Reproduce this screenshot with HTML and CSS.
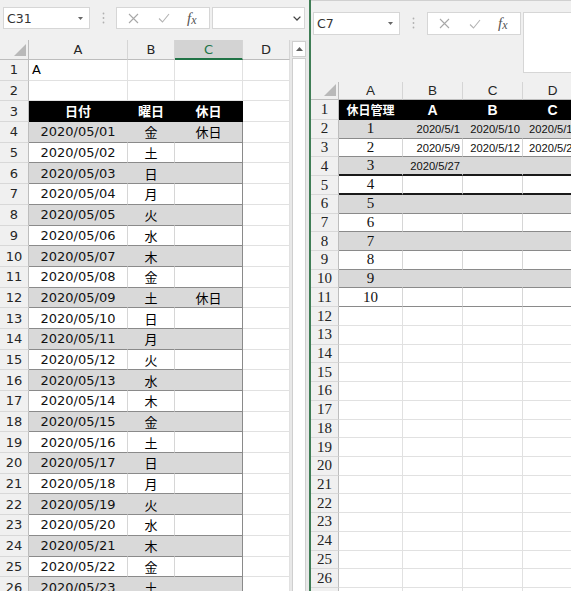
FILE: index.html
```html
<!DOCTYPE html>
<html lang="ja">
<head>
<meta charset="utf-8">
<title>Excel</title>
<link rel="stylesheet" href="styles.css">
</head>
<body>
<div class="app">
  <section class="pane left">
    <div class="fbar">
      <div class="namebox"><span>C31</span><svg width="5" height="3" viewBox="0 0 5 3"><path d="M0 0H5L2.5 3Z" fill="#666"/></svg></div>
      <div class="dots"><svg width="3" height="12" viewBox="0 0 3 12"><circle cx="1.5" cy="1.5" r="0.9" fill="#b0b0b0"/><circle cx="1.5" cy="6" r="0.9" fill="#b0b0b0"/><circle cx="1.5" cy="10.5" r="0.9" fill="#b0b0b0"/></svg></div>
      <div class="fxgroup">
        <svg width="11" height="11" viewBox="0 0 11 11"><path d="M1 1L10 10M10 1L1 10" stroke="#a8a8a8" stroke-width="1.1" fill="none"/></svg>
        <svg width="12" height="10" viewBox="0 0 12 10"><path d="M1 5.5L4.5 9L11 1" stroke="#b4b4b4" stroke-width="1.1" fill="none"/></svg>
        <span class="fx">f<span class="fxx">x</span></span>
      </div>
      <div class="finput"><svg width="8" height="5" viewBox="0 0 8 5"><path d="M0.6 0.6L4 4L7.4 0.6" stroke="#444" stroke-width="1.3" fill="none"/></svg></div>
    </div>
    <div class="lsheet">
      <div class="lgrid">
        <div class="row hdr"><div class="corner"><svg width="12" height="12" viewBox="0 0 12 12"><path d="M12 0V12H0Z" fill="#b9b9b9"/></svg></div><div class="ch">A</div><div class="ch">B</div><div class="ch sel">C</div><div class="ch">D</div></div>
        <div class="row"><div class="rh">1</div><div class="a left-txt">A</div><div class="b"></div><div class="cc"></div><div class="e"></div></div>
        <div class="row"><div class="rh">2</div><div class="a"></div><div class="b"></div><div class="cc"></div><div class="e"></div></div>
        <div class="row th"><div class="rh">3</div><div class="a">日付</div><div class="b">曜日</div><div class="cc">休日</div><div class="e"></div></div>
        <div class="row d g"><div class="rh">4</div><div class="a">2020/05/01</div><div class="b">金</div><div class="cc">休日</div><div class="e"></div></div>
        <div class="row d"><div class="rh">5</div><div class="a">2020/05/02</div><div class="b">土</div><div class="cc"></div><div class="e"></div></div>
        <div class="row d g"><div class="rh">6</div><div class="a">2020/05/03</div><div class="b">日</div><div class="cc"></div><div class="e"></div></div>
        <div class="row d"><div class="rh">7</div><div class="a">2020/05/04</div><div class="b">月</div><div class="cc"></div><div class="e"></div></div>
        <div class="row d g"><div class="rh">8</div><div class="a">2020/05/05</div><div class="b">火</div><div class="cc"></div><div class="e"></div></div>
        <div class="row d"><div class="rh">9</div><div class="a">2020/05/06</div><div class="b">水</div><div class="cc"></div><div class="e"></div></div>
        <div class="row d g"><div class="rh">10</div><div class="a">2020/05/07</div><div class="b">木</div><div class="cc"></div><div class="e"></div></div>
        <div class="row d"><div class="rh">11</div><div class="a">2020/05/08</div><div class="b">金</div><div class="cc"></div><div class="e"></div></div>
        <div class="row d g"><div class="rh">12</div><div class="a">2020/05/09</div><div class="b">土</div><div class="cc">休日</div><div class="e"></div></div>
        <div class="row d"><div class="rh">13</div><div class="a">2020/05/10</div><div class="b">日</div><div class="cc"></div><div class="e"></div></div>
        <div class="row d g"><div class="rh">14</div><div class="a">2020/05/11</div><div class="b">月</div><div class="cc"></div><div class="e"></div></div>
        <div class="row d"><div class="rh">15</div><div class="a">2020/05/12</div><div class="b">火</div><div class="cc"></div><div class="e"></div></div>
        <div class="row d g"><div class="rh">16</div><div class="a">2020/05/13</div><div class="b">水</div><div class="cc"></div><div class="e"></div></div>
        <div class="row d"><div class="rh">17</div><div class="a">2020/05/14</div><div class="b">木</div><div class="cc"></div><div class="e"></div></div>
        <div class="row d g"><div class="rh">18</div><div class="a">2020/05/15</div><div class="b">金</div><div class="cc"></div><div class="e"></div></div>
        <div class="row d"><div class="rh">19</div><div class="a">2020/05/16</div><div class="b">土</div><div class="cc"></div><div class="e"></div></div>
        <div class="row d g"><div class="rh">20</div><div class="a">2020/05/17</div><div class="b">日</div><div class="cc"></div><div class="e"></div></div>
        <div class="row d"><div class="rh">21</div><div class="a">2020/05/18</div><div class="b">月</div><div class="cc"></div><div class="e"></div></div>
        <div class="row d g"><div class="rh">22</div><div class="a">2020/05/19</div><div class="b">火</div><div class="cc"></div><div class="e"></div></div>
        <div class="row d"><div class="rh">23</div><div class="a">2020/05/20</div><div class="b">水</div><div class="cc"></div><div class="e"></div></div>
        <div class="row d g"><div class="rh">24</div><div class="a">2020/05/21</div><div class="b">木</div><div class="cc"></div><div class="e"></div></div>
        <div class="row d"><div class="rh">25</div><div class="a">2020/05/22</div><div class="b">金</div><div class="cc"></div><div class="e"></div></div>
        <div class="row d g"><div class="rh">26</div><div class="a">2020/05/23</div><div class="b">土</div><div class="cc"></div><div class="e"></div></div>
      </div>
      <div class="vscroll">
        <div class="upbtn"><svg width="7" height="4" viewBox="0 0 7 4"><path d="M0 4H7L3.5 0Z" fill="#606060"/></svg></div>
        <div class="thumb"></div>
      </div>
    </div>
  </section>
  <div class="divider"></div>
  <section class="pane right">
    <div class="fbar fbar-r">
      <div class="namebox"><span>C7</span><svg width="5" height="3" viewBox="0 0 5 3"><path d="M0 0H5L2.5 3Z" fill="#666"/></svg></div>
      <div class="dots"><svg width="3" height="12" viewBox="0 0 3 12"><circle cx="1.5" cy="1.5" r="0.9" fill="#b0b0b0"/><circle cx="1.5" cy="6" r="0.9" fill="#b0b0b0"/><circle cx="1.5" cy="10.5" r="0.9" fill="#b0b0b0"/></svg></div>
      <div class="fxgroup">
        <svg width="11" height="11" viewBox="0 0 11 11"><path d="M1 1L10 10M10 1L1 10" stroke="#a8a8a8" stroke-width="1.1" fill="none"/></svg>
        <svg width="12" height="10" viewBox="0 0 12 10"><path d="M1 5.5L4.5 9L11 1" stroke="#b4b4b4" stroke-width="1.1" fill="none"/></svg>
        <span class="fx">f<span class="fxx">x</span></span>
      </div>
      <div class="finput tall"></div>
    </div>
    <div class="rgrid">
      <div class="row hdr"><div class="corner"><svg width="12" height="12" viewBox="0 0 12 12"><path d="M12 0V12H0Z" fill="#b9b9b9"/></svg></div><div class="ch">A</div><div class="ch">B</div><div class="ch">C</div><div class="ch">D</div></div>
      <div class="row th first"><div class="rh">1</div><div class="a jp">休日管理</div><div class="b">A</div><div class="cc">B</div><div class="e">C</div></div>
      <div class="row d g"><div class="rh">2</div><div class="a num">1</div><div class="b dt">2020/5/1</div><div class="cc dt">2020/5/10</div><div class="e dt">2020/5/16</div></div>
      <div class="row d"><div class="rh">3</div><div class="a num">2</div><div class="b dt">2020/5/9</div><div class="cc dt">2020/5/12</div><div class="e dt">2020/5/23</div></div>
      <div class="row d g dark"><div class="rh">4</div><div class="a num">3</div><div class="b dt">2020/5/27</div><div class="cc"></div><div class="e"></div></div>
      <div class="row d dark"><div class="rh">5</div><div class="a num">4</div><div class="b"></div><div class="cc"></div><div class="e"></div></div>
      <div class="row d g"><div class="rh">6</div><div class="a num">5</div><div class="b"></div><div class="cc"></div><div class="e"></div></div>
      <div class="row d"><div class="rh">7</div><div class="a num">6</div><div class="b"></div><div class="cc"></div><div class="e"></div></div>
      <div class="row d g"><div class="rh">8</div><div class="a num">7</div><div class="b"></div><div class="cc"></div><div class="e"></div></div>
      <div class="row d"><div class="rh">9</div><div class="a num">8</div><div class="b"></div><div class="cc"></div><div class="e"></div></div>
      <div class="row d g"><div class="rh">10</div><div class="a num">9</div><div class="b"></div><div class="cc"></div><div class="e"></div></div>
      <div class="row d"><div class="rh">11</div><div class="a num">10</div><div class="b"></div><div class="cc"></div><div class="e"></div></div>
      <div class="row"><div class="rh">12</div><div class="a"></div><div class="b"></div><div class="cc"></div><div class="e"></div></div>
      <div class="row"><div class="rh">13</div><div class="a"></div><div class="b"></div><div class="cc"></div><div class="e"></div></div>
      <div class="row"><div class="rh">14</div><div class="a"></div><div class="b"></div><div class="cc"></div><div class="e"></div></div>
      <div class="row"><div class="rh">15</div><div class="a"></div><div class="b"></div><div class="cc"></div><div class="e"></div></div>
      <div class="row"><div class="rh">16</div><div class="a"></div><div class="b"></div><div class="cc"></div><div class="e"></div></div>
      <div class="row"><div class="rh">17</div><div class="a"></div><div class="b"></div><div class="cc"></div><div class="e"></div></div>
      <div class="row"><div class="rh">18</div><div class="a"></div><div class="b"></div><div class="cc"></div><div class="e"></div></div>
      <div class="row"><div class="rh">19</div><div class="a"></div><div class="b"></div><div class="cc"></div><div class="e"></div></div>
      <div class="row"><div class="rh">20</div><div class="a"></div><div class="b"></div><div class="cc"></div><div class="e"></div></div>
      <div class="row"><div class="rh">21</div><div class="a"></div><div class="b"></div><div class="cc"></div><div class="e"></div></div>
      <div class="row"><div class="rh">22</div><div class="a"></div><div class="b"></div><div class="cc"></div><div class="e"></div></div>
      <div class="row"><div class="rh">23</div><div class="a"></div><div class="b"></div><div class="cc"></div><div class="e"></div></div>
      <div class="row"><div class="rh">24</div><div class="a"></div><div class="b"></div><div class="cc"></div><div class="e"></div></div>
      <div class="row"><div class="rh">25</div><div class="a"></div><div class="b"></div><div class="cc"></div><div class="e"></div></div>
      <div class="row"><div class="rh">26</div><div class="a"></div><div class="b"></div><div class="cc"></div><div class="e"></div></div>
      <div class="row"><div class="rh">27</div><div class="a"></div><div class="b"></div><div class="cc"></div><div class="e"></div></div>
    </div>
  </section>
</div>
</body>
</html>
```
FILE: styles.css
```css
html, body {
  margin: 0;
  padding: 0;
  background: #ffffff;
}
body {
  width: 571px;
  height: 591px;
  overflow: hidden;
  font-family: "DejaVu Sans", "Noto Sans CJK JP", sans-serif;
  color: #000;
}
.app {
  display: flex;
  width: 571px;
  height: 591px;
  overflow: hidden;
}
.pane {
  display: flex;
  flex-direction: column;
  overflow: hidden;
  background: #f0f0f0;
}
.left {
  width: 309px;
  flex: none;
}
.divider {
  width: 2px;
  flex: none;
  background: #3f7d55;
}
.right {
  flex: 1;
  min-width: 0;
  border-top: 1px solid #d0d0d0;
  box-sizing: border-box;
}

/* formula bar */
.fbar {
  display: flex;
  align-items: flex-start;
  height: 40px;
  flex: none;
  padding-top: 7px;
  box-sizing: border-box;
}
.fbar-r {
  height: 81px;
  padding-top: 11px;
}
.namebox {
  width: 87px;
  height: 22px;
  margin-left: 3px;
  box-sizing: border-box;
  background: #fff;
  border: 1px solid #d6d6d6;
  display: flex;
  align-items: center;
  justify-content: space-between;
  padding: 0 6px 0 3px;
  font-family: "DejaVu Sans", sans-serif;
  font-size: 12.5px;
  color: #333;
}
.fbar-r .namebox {
  margin-left: 2px;
  height: 23px;
}
.dots {
  width: 26px;
  height: 22px;
  display: flex;
  align-items: center;
  justify-content: center;
}
.fxgroup {
  width: 94px;
  height: 22px;
  box-sizing: border-box;
  background: #fff;
  border: 1px solid #d6d6d6;
  display: flex;
  align-items: center;
  padding-left: 11px;
  gap: 19px;
}
.fbar-r .fxgroup {
  height: 23px;
  margin-left: 1px;
}
.fx {
  font-family: "Liberation Serif", serif;
  font-style: italic;
  font-size: 15px;
  color: #555;
  line-height: 1;
  margin-left: -2px;
}
.fxx {
  font-size: 12px;
  position: relative;
  top: 1px;
}
.finput {
  width: 93px;
  height: 22px;
  margin-left: 2px;
  box-sizing: border-box;
  background: #fff;
  border: 1px solid #d6d6d6;
  display: flex;
  align-items: center;
  justify-content: flex-end;
  padding-right: 3px;
}
.finput.tall {
  width: auto;
  flex: 1;
  height: 61px;
  border-right: none;
}

/* sheet */
.lsheet {
  display: flex;
  flex: 1;
  min-height: 0;
}
.lgrid {
  width: 290px;
  flex: none;
  background: #fff;
}
.vscroll {
  width: 19px;
  flex: none;
  background: #e8e8e8;
  display: flex;
  flex-direction: column;
  padding: 1px 3px 0 2px;
  box-sizing: border-box;
  gap: 1px;
}
.upbtn {
  height: 16px;
  background: #fff;
  border: 1px solid #cfcfcf;
  box-sizing: border-box;
  display: flex;
  align-items: center;
  justify-content: center;
}
.thumb {
  flex: 1;
  background: #fff;
  border: 1px solid #cfcfcf;
  border-bottom: none;
}

.row {
  display: grid;
  height: 20.7px;
}
.lgrid .row {
  grid-template-columns: 29px 99px 47px 68px 47px;
}
.rgrid {
  background: #fff;
  flex: 1;
  width: 272px;
}
.rgrid .row {
  grid-template-columns: 28px 64px 60px 60px 60px;
  height: 18.72px;
}
.rgrid .row.hdr {
  height: 18px;
}
.rgrid .row.first {
  height: 20px;
}
.lgrid .row.hdr {
  height: 20px;
}

.row > div {
  box-sizing: border-box;
  border-right: 1px solid #e1e1e1;
  border-bottom: 1px solid #e1e1e1;
  display: flex;
  align-items: center;
  justify-content: center;
  white-space: nowrap;
  overflow: hidden;
  font-size: 13px;
}
.hdr > div {
  background: #f0f0f0;
  border-right-color: #d5d5d5;
  border-bottom-color: #bdbdbd;
  color: #262626;
}
.hdr > .corner {
  justify-content: flex-end;
  align-items: flex-end;
  padding: 0 2px 3px 0;
  border-right-color: #bdbdbd;
}
.hdr > .sel {
  background: #d3d3d3;
  color: #217346;
  border-bottom: 2px solid #217346;
}
.row > .rh {
  background: #f0f0f0;
  border-right-color: #bdbdbd;
  border-bottom-color: #d8d8d8;
  color: #262626;
}
.left-txt {
  justify-content: flex-start !important;
  padding-left: 3px;
  font-size: 13.5px;
}

/* table header row */
.th > .a, .th > .b, .th > .cc {
  background: #000;
  color: #fff;
  font-weight: bold;
  border-color: #000;
  font-family: "Noto Sans CJK JP", sans-serif;
  font-size: 13px;
}
.lgrid .th > .a, .lgrid .th > .b, .lgrid .th > .cc {
  padding-bottom: 1px;
}

/* data rows */
.d > .a, .d > .b {
  border-bottom-color: #8a8a8a;
  border-right-color: #d6d6d6;
}
.d > .cc {
  border-bottom-color: #8a8a8a;
  border-right-color: #8a8a8a;
}
.g > .a, .g > .b, .g > .cc {
  background: #d9d9d9;
}
.g > .a, .g > .b {
  border-right-color: #d9d9d9;
}
.lgrid .d > .b, .lgrid .d > .cc {
  font-family: "Noto Sans CJK JP", sans-serif;
  font-size: 13px;
}
.lgrid .d > .a {
  font-size: 13px;
  color: #111;
}

/* right pane */
.rgrid .hdr > .ch {
  font-family: "Liberation Sans", sans-serif;
  font-size: 13.5px;
}
.rgrid .row > .rh {
  font-family: "Liberation Serif", serif;
  font-size: 15px;
  color: #222;
}
.rgrid .th > div:not(.rh) {
  background: #000;
  color: #fff;
  font-weight: bold;
  border-color: #000;
}
.rgrid .th > .b, .rgrid .th > .cc, .rgrid .th > .e {
  font-family: "Liberation Sans", sans-serif;
  font-size: 14px;
}
.rgrid .th > .jp {
  font-family: "Noto Sans CJK JP", sans-serif;
  font-size: 12px;
}
.rgrid .d > .e {
  border-bottom-color: #8a8a8a;
  border-right-color: #d6d6d6;
}
.rgrid .d > .cc {
  border-right-color: #d6d6d6;
}
.rgrid .g > .cc, .rgrid .g > .e {
  background: #d9d9d9;
  border-right-color: #d9d9d9;
}
.rgrid .dark > .a, .rgrid .dark > .b, .rgrid .dark > .cc, .rgrid .dark > .e {
  border-bottom: 2px solid #1a1a1a;
}
.num {
  font-family: "Liberation Serif", serif;
  font-size: 15px !important;
  color: #111;
}
.dt {
  justify-content: flex-end !important;
  padding-right: 2px;
  font-family: "Liberation Sans", sans-serif;
  font-size: 11.2px !important;
  color: #111;
}
.rgrid .row > .e.dt {
  justify-content: flex-start !important;
  padding-left: 6px;
  overflow: visible;
}
```
